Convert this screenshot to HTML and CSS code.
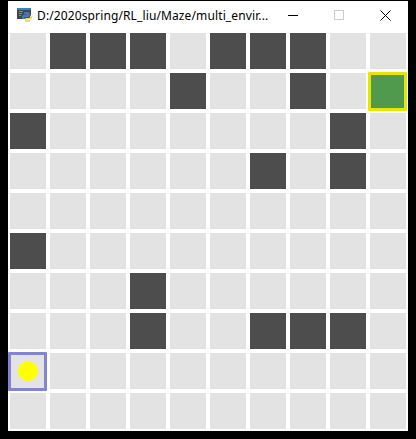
FILE: index.html
```html
<!doctype html>
<html>
<head>
<meta charset="utf-8">
<title>Maze</title>
<link rel="stylesheet" href="styles.css">
</head>
<body>
<div class="window">
  <div class="titlebar">
    <svg class="appicon" width="16" height="16" viewBox="0 0 16 16">
      <rect x="0" y="1" width="14" height="11" fill="#3b4a54"/>
      <rect x="0" y="1" width="14" height="2" fill="#2f86c8"/>
      <rect x="2" y="4" width="4" height="1" fill="#5fa860"/>
      <rect x="2" y="6" width="3" height="1" fill="#5fa860"/>
      <rect x="2" y="8" width="2" height="1" fill="#5fa860"/>
      <path d="M8 5h3a1.500 1.500 0 0 1 1.500 1.500V9a1 1 0 0 1-1 1H8.500a1 1 0 0 0-1 1v1H6.500A1.500 1.500 0 0 1 5 10.500v-1A1.500 1.500 0 0 1 6.500 8H10v-.5H7V6a1 1 0 0 1 1-1z" fill="#3f7fb8"/>
      <path d="M13 8.500h.5A1.500 1.500 0 0 1 15 10v1a1.500 1.500 0 0 1-1.500 1.500H10v.5h3v1a1 1 0 0 1-1 1H9.500A1.500 1.500 0 0 1 8 13.500V12a1 1 0 0 1 1-1h3a1 1 0 0 0 1-1z" fill="#f5d76a"/>
    </svg>
    <span class="title">D:/2020spring/RL_liu/Maze/multi_envir...</span>
    <div class="controls">
      <span class="ctl"><i class="min"></i></span>
      <span class="ctl"><i class="max"></i></span>
      <span class="ctl">
        <svg width="11" height="11" viewBox="0 0 11 11"><path d="M.5.500l10 10M10.500.500l-10 10" stroke="#000" fill="none"/></svg>
      </span>
    </div>
  </div>
  <div class="board">
    <div class="cell"></div><div class="cell wall"></div><div class="cell wall"></div><div class="cell wall"></div><div class="cell"></div><div class="cell wall"></div><div class="cell wall"></div><div class="cell wall"></div><div class="cell"></div><div class="cell"></div>
    <div class="cell"></div><div class="cell"></div><div class="cell"></div><div class="cell"></div><div class="cell wall"></div><div class="cell"></div><div class="cell"></div><div class="cell wall"></div><div class="cell"></div><div class="cell goal"></div>
    <div class="cell wall"></div><div class="cell"></div><div class="cell"></div><div class="cell"></div><div class="cell"></div><div class="cell"></div><div class="cell"></div><div class="cell"></div><div class="cell wall"></div><div class="cell"></div>
    <div class="cell"></div><div class="cell"></div><div class="cell"></div><div class="cell"></div><div class="cell"></div><div class="cell"></div><div class="cell wall"></div><div class="cell"></div><div class="cell wall"></div><div class="cell"></div>
    <div class="cell"></div><div class="cell"></div><div class="cell"></div><div class="cell"></div><div class="cell"></div><div class="cell"></div><div class="cell"></div><div class="cell"></div><div class="cell"></div><div class="cell"></div>
    <div class="cell wall"></div><div class="cell"></div><div class="cell"></div><div class="cell"></div><div class="cell"></div><div class="cell"></div><div class="cell"></div><div class="cell"></div><div class="cell"></div><div class="cell"></div>
    <div class="cell"></div><div class="cell"></div><div class="cell"></div><div class="cell wall"></div><div class="cell"></div><div class="cell"></div><div class="cell"></div><div class="cell"></div><div class="cell"></div><div class="cell"></div>
    <div class="cell"></div><div class="cell"></div><div class="cell"></div><div class="cell wall"></div><div class="cell"></div><div class="cell"></div><div class="cell wall"></div><div class="cell wall"></div><div class="cell wall"></div><div class="cell"></div>
    <div class="cell start"><span class="dot"></span></div><div class="cell"></div><div class="cell"></div><div class="cell"></div><div class="cell"></div><div class="cell"></div><div class="cell"></div><div class="cell"></div><div class="cell"></div><div class="cell"></div>
    <div class="cell"></div><div class="cell"></div><div class="cell"></div><div class="cell"></div><div class="cell"></div><div class="cell"></div><div class="cell"></div><div class="cell"></div><div class="cell"></div><div class="cell"></div>
  </div>
</div>
</body>
</html>
```

FILE: styles.css
```css
*, *::after { box-sizing: border-box; }
html, body { margin: 0; height: 100%; background: #000; overflow: hidden; }
body { padding: 1px 8px 8px 8px; }

.window { width: 400px; height: 430px; background: #fff; display: flex; flex-direction: column; }

.titlebar { height: 30px; display: flex; align-items: center; padding: 0 0 2px 9px; flex: none; }
.appicon { flex: none; margin-right: 4px; }
.title { font-family: "Noto Sans", "Open Sans", sans-serif; font-size: 12px; letter-spacing: .12px; color: #000; white-space: nowrap; flex: 1; }
.controls { display: flex; height: 28px; }
.ctl { width: 46px; display: flex; align-items: center; justify-content: center; }
.min { display: block; width: 10px; height: 1px; background: #000; }
.max { display: block; width: 10px; height: 10px; border: 1px solid #ccc; }

.board { display: grid; grid-template-columns: repeat(10, 36px); grid-auto-rows: 36px; gap: 4px; padding: 2px 2px 0 2px; }
.cell { background: #e3e3e3; position: relative; }
.wall { background: #4d4d4d; }

.goal { background: #4f9a4c; }
.goal::after { content: ""; position: absolute; left: -2px; top: -1px; width: 39px; height: 39px; border: 3px solid #e6e600; border-radius: 1px; }
.start::after { content: ""; position: absolute; left: -2px; top: -1px; width: 39px; height: 39px; border: 3px solid #8484d4; border-radius: 1px; }
.dot { position: absolute; left: 8px; top: 8px; width: 20px; height: 20px; border-radius: 50%; background: #ff0; }
```
